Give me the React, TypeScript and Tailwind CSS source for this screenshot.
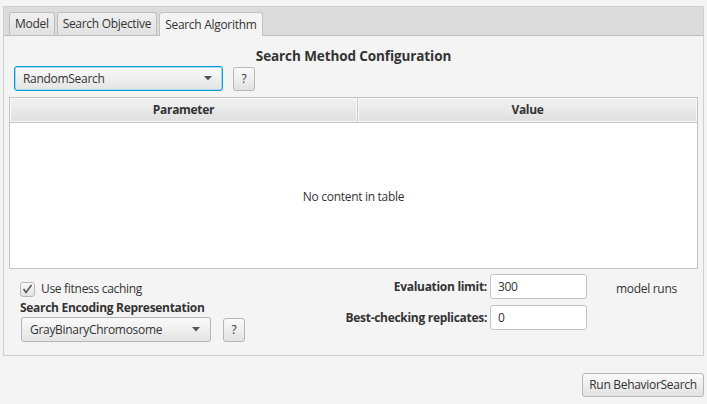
import React from "react";

const font = { fontFamily: '"Open Sans", "Noto Sans", sans-serif' };

function Combo({ label, width, focused }: { label: string; width: string; focused?: boolean }) {
  return (
    <div
      className={`${width} h-[25px] rounded-[3px] flex items-center justify-between pl-[8px] pr-[10px] bg-gradient-to-b from-[#fafafa] to-[#e4e4e4] ${
        focused ? "border border-[#039ed3] shadow-[inset_0_0_0_1px_#a8d8ee]" : "border border-[#b7b7b7]"
      }`}
    >
      <span className="text-[12px] text-[#333]">{label}</span>
      <svg width="8" height="5" viewBox="0 0 8 5">
        <path d="M0 0 L8 0 L4 4.5 Z" fill="#555" />
      </svg>
    </div>
  );
}

function Help() {
  return (
    <div className="w-[22px] h-[24px] rounded-[3px] border border-[#b7b7b7] bg-gradient-to-b from-[#fafafa] to-[#e2e2e2] flex items-center justify-center text-[12px] text-[#333]">
      ?
    </div>
  );
}

function Tab({ label, selected }: { label: string; selected?: boolean }) {
  return (
    <div
      className={`h-[23px] px-[5px] rounded-t-[3px] border border-b-0 flex items-center text-[12px] text-[#333] ${
        selected
          ? "bg-[#f4f4f4] border-[#c2c2c2] h-[24px] -mb-px"
          : "bg-gradient-to-b from-[#f0f0f0] to-[#e1e1e1] border-[#bdbdbd]"
      }`}
    >
      {label}
    </div>
  );
}

export default function App() {
  return (
    <div style={font} className="w-[707px] h-[404px] bg-[#f4f4f4] pt-[6px] px-[3px] text-[#333] overflow-hidden tracking-[-0.3px]">
      <div className="h-[350px] border border-[#cfcfcf] flex flex-col">
        <div className="h-[29px] bg-[#dcdcdc] border-b border-[#bcbcbc] flex items-end pl-[5px] gap-[2px]">
          <Tab label="Model" />
          <Tab label="Search Objective" />
          <Tab label="Search Algorithm" selected />
        </div>
        <div className="flex-1 bg-[#f4f4f4] px-[5px] flex flex-col">
          <div className="text-center font-bold text-[13.5px] tracking-[-0.1px] mt-[12px] leading-[17px]">Search Method Configuration</div>
          <div className="flex items-center mt-[1px] pl-[5px] gap-[10px]">
            <Combo label="RandomSearch" width="w-[209px]" focused />
            <Help />
          </div>
          <div className="mt-[6px] h-[172px] border border-[#c4c4c4] bg-white flex flex-col">
            <div className="flex h-[25px] border-b border-[#c4c4c4]">
              <div className="w-[348px] border-r border-[#c8c8c8] bg-gradient-to-b from-[#f2f2f2] to-[#dfdfdf] shadow-[inset_0_0_0_1px_#f8f8f8] flex items-center justify-center font-bold text-[12px]">
                Parameter
              </div>
              <div className="flex-1 bg-gradient-to-b from-[#f2f2f2] to-[#dfdfdf] shadow-[inset_0_0_0_1px_#f8f8f8] flex items-center justify-center font-bold text-[12px]">
                Value
              </div>
            </div>
            <div className="flex-1 flex items-center justify-center text-[12px] pt-[3px]">No content in table</div>
          </div>
          <div className="flex">
            <div className="w-[336px] pl-[11px] pt-[12px]">
              <div className="flex items-center gap-[6px] h-[16px]">
                <div className="w-[15px] h-[15px] rounded-[3px] border border-[#b7b7b7] bg-gradient-to-b from-[#fafafa] to-[#e2e2e2] flex items-center justify-center">
                  <svg width="11" height="10" viewBox="0 0 11 10">
                    <path d="M1.5 5 L4 8.5 L9.5 1" stroke="#555" strokeWidth="1.6" fill="none" />
                  </svg>
                </div>
                <span className="text-[12px] leading-[16px]">Use fitness caching</span>
              </div>
              <div className="font-bold text-[12px] mt-[3px] leading-[16px]">Search Encoding Representation</div>
              <div className="flex items-center mt-[1px] pl-[1px] gap-[12px]">
                <Combo label="GrayBinaryChromosome" width="w-[190px]" />
                <Help />
              </div>
            </div>
            <div className="pt-[5px] grid grid-cols-[145px_97px_auto] grid-rows-[25px_25px] gap-y-[6px] items-center">
              <div className="flex justify-end font-bold text-[12px] pr-[3px] whitespace-nowrap leading-[16px]">
                <span>Evaluation limit:</span>
              </div>
              <div className="h-[25px] border border-[#c4c4c4] rounded-[3px] bg-white flex items-center pl-[7px] text-[12px]">300</div>
              <div className="pl-[29px] text-[12px] pt-[4px] leading-[16px] whitespace-nowrap">model runs</div>
              <div className="flex justify-end font-bold text-[12px] pr-[3px] whitespace-nowrap leading-[16px]">
                <span>Best-checking replicates:</span>
              </div>
              <div className="h-[25px] border border-[#c4c4c4] rounded-[3px] bg-white flex items-center pl-[7px] text-[12px]">0</div>
              <div />
            </div>
          </div>
        </div>
      </div>
      <div className="flex justify-end mt-[17px]">
        <div className="h-[24px] w-[122px] rounded-[3px] border border-[#b7b7b7] bg-gradient-to-b from-[#fafafa] to-[#e2e2e2] flex items-center justify-center text-[12px]">
          Run BehaviorSearch
        </div>
      </div>
    </div>
  );
}
